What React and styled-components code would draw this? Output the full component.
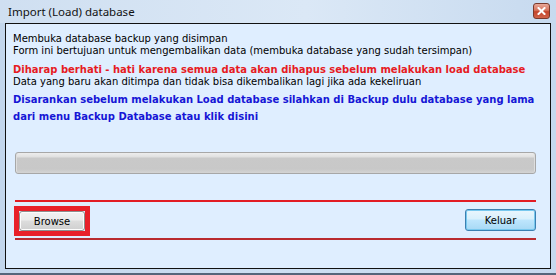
import React from "react";
import styled, { createGlobalStyle } from "styled-components";

const Global = createGlobalStyle`
  html, body { margin: 0; padding: 0; background: #fff; }
  body { width: 556px; height: 275px; overflow: hidden; }
`;

const Window = styled.div`
  width: 556px;
  height: 275px;
  box-sizing: border-box;
  display: flex;
  flex-direction: column;
  background: linear-gradient(to right, #c3d6ec 0%, #cddff2 50%, #c6d9ee 100%);
  border-bottom: 2px solid #56657a;
`;

const TitleBar = styled.div`
  height: 23px;
  flex: none;
  display: flex;
  align-items: center;
  justify-content: space-between;
  padding: 0 6px 0 8px;
  background: linear-gradient(to right, #cfdff1 0%, #dbe8f6 55%, #c7daef 100%);
`;

const Title = styled.span`
  font-family: "Noto Sans", "DejaVu Sans", sans-serif;
  font-size: 11.5px;
  color: #111;
  margin-top: -1px;
`;

const CloseBtn = styled.div`
  width: 15px;
  height: 14px;
  margin-top: -1px;
  border: 1px solid #7a3a2c;
  border-radius: 3px;
  background: linear-gradient(to bottom, #e8a898 0%, #d6735c 45%, #c4442b 55%, #d0644a 100%);
  display: flex;
  align-items: center;
  justify-content: center;
`;

const Frame = styled.div`
  flex: 1;
  padding: 0 5px 4px 5px;
  display: flex;
`;

const Client = styled.div`
  flex: 1;
  border: 1px solid #111;
  background: #dfeeff;
  display: flex;
  flex-direction: column;
  padding: 9px 14px 0 7px;
  font-family: "DejaVu Sans", sans-serif;
`;

const Line = styled.div`
  font-size: 10px;
  line-height: 12px;
  height: 12px;
  white-space: nowrap;
  color: ${(p) => p.$color || "#000"};
  font-weight: ${(p) => (p.$bold ? 700 : 400)};
  margin-top: ${(p) => p.$mt || 0}px;
`;

const BlueLine = styled.div`
  font-size: 10px;
  line-height: 17px;
  height: 17px;
  white-space: nowrap;
  color: #1616d6;
  font-weight: 700;
  margin-top: ${(p) => p.$mt || 0}px;
`;

const Inner = styled.div`
  margin-left: 2px;
  display: flex;
  flex-direction: column;
`;

const Progress = styled.div`
  margin-top: 27px;
  height: 22px;
  box-sizing: border-box;
  border: 1px solid #a7a7a7;
  border-radius: 3px;
  background: linear-gradient(to bottom, #ededed 0%, #e0e0e0 20%, #c9c9c9 25%, #c8c8c8 80%, #d4d4d4 100%);
  box-shadow: inset 1px 0 0 #dedede, inset -1px 0 0 #dedede;
`;

const RedRule = styled.div`
  height: 2px;
  background: ${(p) => p.$c};
  margin-top: ${(p) => p.$mt}px;
`;

const ButtonRow = styled.div`
  display: flex;
  justify-content: space-between;
  align-items: flex-start;
  margin-top: 4px;
  height: 32px;
`;

const Highlight = styled.div`
  border: 5px solid #e8202a;
  margin-left: -1px;
  display: flex;
`;

const Button = styled.button`
  font-family: "DejaVu Sans", sans-serif;
  font-size: 10px;
  color: #000;
  padding: 0;
  border-radius: 3px;
  cursor: default;
  width: ${(p) => p.$w}px;
  height: ${(p) => p.$h}px;
  margin-top: ${(p) => p.$mt || 0}px;
  border: 1px solid ${(p) => (p.$primary ? "#3c7fb1" : "#8e8f8f")};
  background: ${(p) =>
    p.$primary
      ? "linear-gradient(to bottom, #eaf6fd 0%, #d9f0fc 45%, #bee6fd 50%, #a7d9f5 100%)"
      : "linear-gradient(to bottom, #f2f2f2 0%, #ebebeb 45%, #dddddd 50%, #cfcfcf 100%)"};
  box-shadow: ${(p) => (p.$primary ? "inset 0 0 0 1px #78c8ee" : "inset 0 0 0 1px #fcfcfc")};
`;

export default function App() {
  return (
    <>
      <Global />
      <Window>
        <TitleBar>
          <Title>Import (Load) database</Title>
          <CloseBtn>
            <svg width="9" height="8" viewBox="0 0 9 8">
              <path d="M1.5 1 L7.5 7 M7.5 1 L1.5 7" stroke="#fff" strokeWidth="2" strokeLinecap="square" />
            </svg>
          </CloseBtn>
        </TitleBar>
        <Frame>
          <Client>
            <Line>Membuka database backup yang disimpan</Line>
            <Line>Form ini bertujuan untuk mengembalikan data (membuka database yang sudah tersimpan)</Line>
            <Line $bold $color="#e61b23" $mt={7}>
              Diharap berhati - hati karena semua data akan dihapus sebelum melakukan load database
            </Line>
            <Line>Data yang baru akan ditimpa dan tidak bisa dikembalikan lagi jika ada kekeliruan</Line>
            <BlueLine $mt={3}>
              Disarankan sebelum melakukan Load database silahkan di Backup dulu database yang lama
            </BlueLine>
            <BlueLine>dari menu Backup Database atau klik disini</BlueLine>
            <Inner>
              <Progress />
              <RedRule $c="#e21c24" $mt={26} />
              <ButtonRow>
                <Highlight>
                  <Button $w={66} $h={20}>Browse</Button>
                </Highlight>
                <Button $primary $w={71} $h={22} $mt={3}>Keluar</Button>
              </ButtonRow>
              <RedRule $c="#b92a2f" $mt={0} />
            </Inner>
          </Client>
        </Frame>
      </Window>
    </>
  );
}
